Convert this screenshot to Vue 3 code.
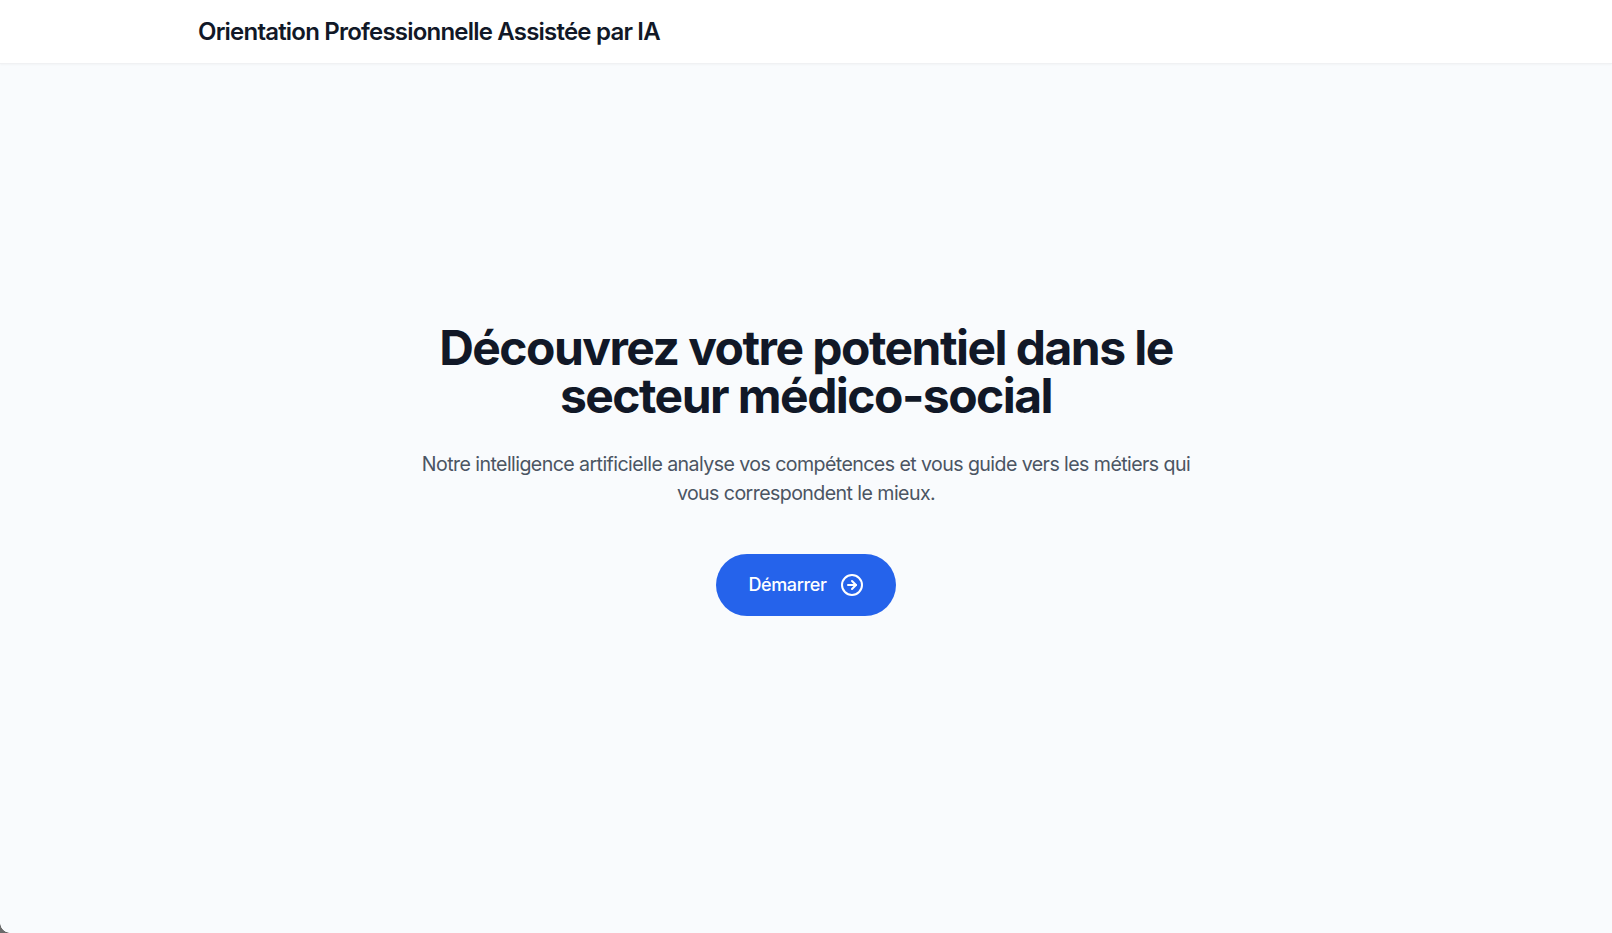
<script setup>
const title = 'Orientation Professionnelle Assistée par IA'
</script>

<template>
  <div class="page">
    <header class="topbar">
      <div class="container">
        <h2 class="brand">{{ title }}</h2>
      </div>
    </header>
    <main class="hero">
      <h1 class="headline">Découvrez votre potentiel dans le<br />secteur médico-social</h1>
      <p class="lead">Notre intelligence artificielle analyse vos compétences et vous guide vers les métiers qui vous correspondent le mieux.</p>
      <button class="cta" type="button">
        <span>Démarrer</span>
        <svg class="cta-icon" viewBox="0 0 24 24" fill="none" stroke="currentColor" stroke-width="2" stroke-linecap="round" stroke-linejoin="round">
          <circle cx="12" cy="12" r="10" />
          <path d="M12 16l4-4-4-4" />
          <path d="M8 12h8" />
        </svg>
      </button>
    </main>
    <div class="corner"></div>
  </div>
</template>

<style>
html, body { margin: 0; background: #f9fbfd; }
</style>

<style scoped>
.page {
  position: relative;
  height: 933px;
  overflow: hidden;
  background: #f9fbfd;
  font-family: Inter, "Liberation Sans", sans-serif;
  display: flex;
  flex-direction: column;
}
.topbar {
  height: 64px;
  box-sizing: border-box;
  padding-top: 1px;
  background: #fff;
  border-bottom: 1px solid #f0f1f3;
  box-shadow: 0 1px 2px rgba(0, 0, 0, 0.03);
  flex: none;
}
.container {
  max-width: 1280px;
  height: 100%;
  margin: 0 auto;
  padding: 0 32px;
  box-sizing: border-box;
  display: flex;
  align-items: center;
}
.brand {
  margin: 0;
  font-size: 24px;
  line-height: 32px;
  font-weight: 600;
  letter-spacing: -0.033em;
  color: #111827;
}
.hero {
  display: flex;
  flex-direction: column;
  align-items: center;
  text-align: center;
  padding-top: 260px;
}
.headline {
  margin: 0 0 30px;
  font-size: 48px;
  line-height: 48px;
  font-weight: 700;
  letter-spacing: -0.032em;
  color: #111827;
}
.lead {
  margin: 0 0 46px;
  width: 800px;
  font-size: 19.6px;
  line-height: 28.8px;
  letter-spacing: -0.58px;
  color: #4b5563;
}
.cta {
  display: inline-flex;
  align-items: center;
  gap: 13px;
  height: 62px;
  padding: 0 32.5px;
  border: none;
  border-radius: 9999px;
  background: #2563eb;
  color: #fff;
  font-family: inherit;
  font-size: 18px;
  font-weight: 500;
  letter-spacing: -0.02em;
}
.cta-icon {
  width: 24px;
  height: 24px;
}
.corner {
  position: absolute;
  left: 0;
  bottom: 0;
  width: 10px;
  height: 10px;
  background: radial-gradient(circle at 100% 0, transparent 9.5px, #6b6b6b 10px);
}
</style>
